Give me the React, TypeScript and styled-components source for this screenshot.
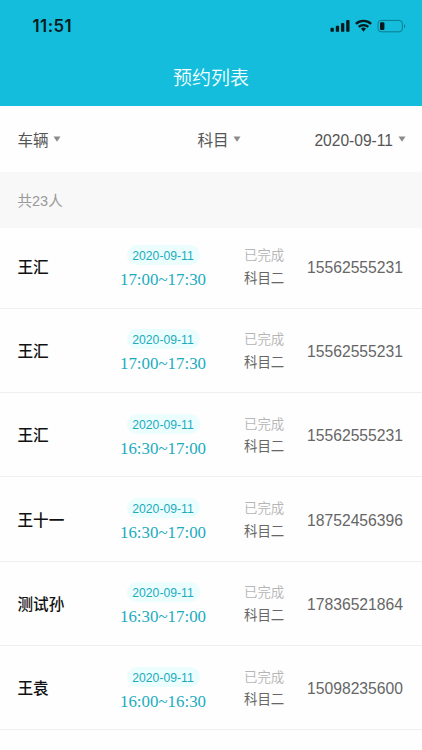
import React from "react";
import styled, { createGlobalStyle } from "styled-components";

const GlobalStyle = createGlobalStyle`
  * { box-sizing: border-box; }
  html, body { margin: 0; background: #fefefe; }
  body { font-family: "Liberation Sans", "Noto Sans CJK SC", sans-serif; overflow: hidden; }
`;

const Screen = styled.main`
  width: 422px;
  height: 750px;
  overflow: hidden;
  background: #fefefe;
`;

const Header = styled.header`
  height: 106px;
  background: #13bddb;
`;

const StatusBar = styled.div`
  height: 52px;
  padding: 0 16px 0 32.5px;
  display: flex;
  align-items: center;
  justify-content: space-between;
`;

const Clock = styled.span`
  font: 600 16.8px/20px Inter, sans-serif;
  letter-spacing: 0.5px;
  color: #07191c;
`;

const StatusIcons = styled.svg`
  display: block;
  width: 76px;
  height: 14px;
`;

const Title = styled.h1`
  margin: 0;
  height: 54px;
  font-size: 19px;
  line-height: 54px;
  font-weight: 350;
  text-align: center;
  color: #f4fdff;
`;

const Filters = styled.nav`
  height: 66px;
  padding: 3px 16.5px 0 17.5px;
  display: grid;
  grid-template-columns: 180px 1fr auto;
  align-items: center;
`;

const Filter = styled.button`
  display: flex;
  align-items: center;
  gap: 4.5px;
  padding: 0;
  border: 0;
  background: none;
  font-family: inherit;
  font-size: 15.6px;
  line-height: 24px;
  color: #555;
`;

const Caret = styled.svg`
  display: block;
  width: 8px;
  height: 6px;
  margin-top: -3px;
  fill: #8b8b8b;
`;

const Summary = styled.div`
  height: 56px;
  padding-left: 17.5px;
  background: #f8f8f8;
  color: #999;
  font-size: 14.5px;
  line-height: 59px;
`;

const List = styled.ul`
  list-style: none;
  margin: 0;
  padding: 0;
`;

const Row = styled.li`
  height: 84.3px;
  padding: 3px 19px 0 17.5px;
  border-bottom: 1px solid #efefef;
  display: grid;
  grid-template-columns: 99.5px 92px 80px 1fr;
  align-items: center;
  &:first-child { height: 80.8px; padding-top: 0; }
`;

const Name = styled.strong`
  font-size: 15.6px;
  line-height: 24px;
  font-weight: 500;
  color: #111;
`;

const Slot = styled.div`
  display: flex;
  flex-direction: column;
  align-items: center;
  padding-top: 4px;
`;

const DateTag = styled.span`
  width: 73px;
  height: 20px;
  border-radius: 10px;
  background: #ebfdfd;
  color: #1cacbe;
  font-size: 12.2px;
  line-height: 22px;
  text-align: center;
`;

const Time = styled.span`
  font-family: "Liberation Serif", serif;
  font-size: 16.9px;
  line-height: 29px;
  color: #1cacbe;
`;

const Lesson = styled.div`
  padding: 0 0 0 35px;
  display: flex;
  flex-direction: column;
  font-size: 13.4px;
  line-height: 22.5px;
  white-space: nowrap;
  color: #666;
`;

const Status = styled.span`
  color: #b5b5b5;
  font-weight: 350;
`;

const Phone = styled.span`
  justify-self: end;
  font-size: 15.7px;
  line-height: 24px;
  color: #666;
`;

const DownCaret = () => (
  <Caret viewBox="0 0 8 6" aria-hidden="true">
    <path d="M0.5 0.5h7L4 5.7z" />
  </Caret>
);

const bookings = [
  { name: "王汇", time: "17:00~17:30", phone: "15562555231" },
  { name: "王汇", time: "17:00~17:30", phone: "15562555231" },
  { name: "王汇", time: "16:30~17:00", phone: "15562555231" },
  { name: "王十一", time: "16:30~17:00", phone: "18752456396" },
  { name: "测试孙", time: "16:30~17:00", phone: "17836521864" },
  { name: "王袁", time: "16:00~16:30", phone: "15098235600" },
];

export default function App() {
  return (
    <Screen>
      <GlobalStyle />
      <Header>
        <StatusBar>
          <Clock>11:51</Clock>
          <StatusIcons viewBox="0 0 76 14" aria-hidden="true">
            <g fill="#07191c">
              <rect x="0.5" y="8.8" width="3.3" height="4" rx="0.9" />
              <rect x="5.8" y="6.8" width="3.3" height="6" rx="0.9" />
              <rect x="11" y="4" width="3.3" height="8.8" rx="0.9" />
              <rect x="16.2" y="1" width="3.3" height="11.8" rx="0.9" />
              <rect x="50" y="3.3" width="4.4" height="7.7" rx="1.3" />
              <path d="M31 9.6a3.8 3.8 0 0 1 5 0l-2.5 3.2z" />
            </g>
            <g fill="none" stroke="#07191c" strokeWidth="2.3">
              <path d="M25.9 4.8a11.2 11.2 0 0 1 15.2 0" />
              <path d="M28.7 7.9a7.1 7.1 0 0 1 9.6 0" />
            </g>
            <rect x="48" y="1.4" width="24.4" height="11.4" rx="3.2" fill="none" stroke="#0c7c90" />
            <path d="M74 5.2c1.6.6 1.6 3.2 0 3.8z" fill="#0c7c90" />
          </StatusIcons>
        </StatusBar>
        <Title>预约列表</Title>
      </Header>
      <Filters>
        <Filter>车辆<DownCaret /></Filter>
        <Filter>科目<DownCaret /></Filter>
        <Filter>2020-09-11<DownCaret /></Filter>
      </Filters>
      <Summary>共23人</Summary>
      <List>
        {bookings.map((b, i) => (
          <Row key={i}>
            <Name>{b.name}</Name>
            <Slot>
              <DateTag>2020-09-11</DateTag>
              <Time>{b.time}</Time>
            </Slot>
            <Lesson>
              <Status>已完成</Status>
              <span>科目二</span>
            </Lesson>
            <Phone>{b.phone}</Phone>
          </Row>
        ))}
      </List>
    </Screen>
  );
}
